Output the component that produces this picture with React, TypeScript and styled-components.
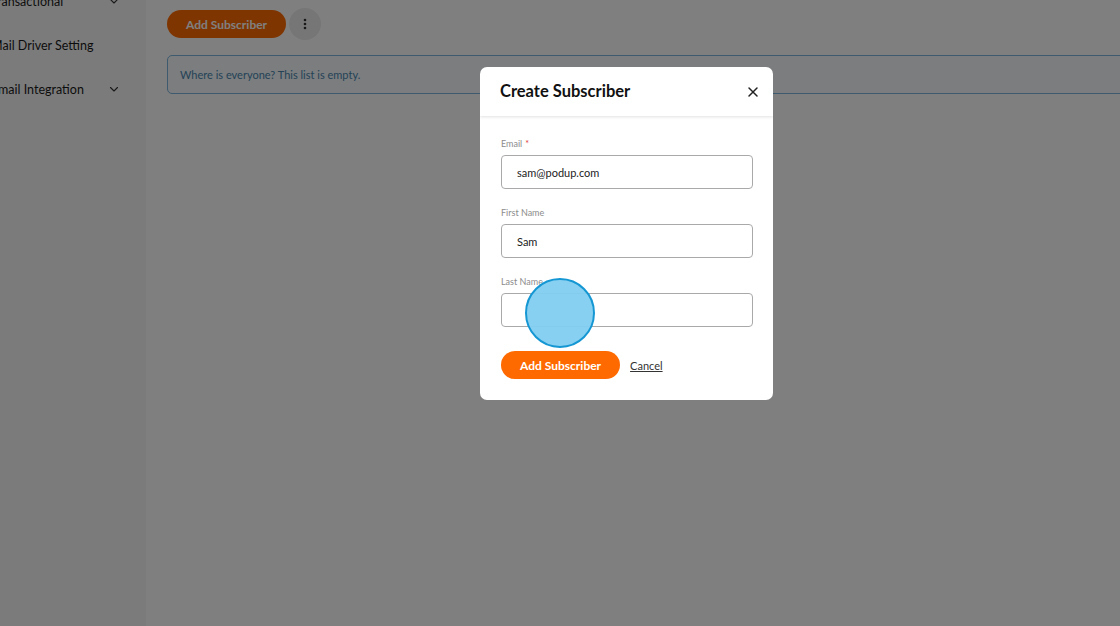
import styled, { createGlobalStyle } from "styled-components";

const Global = createGlobalStyle`
  html, body { margin: 0; padding: 0; }
  body { font-family: Lato, "Noto Sans", sans-serif; background: #fff; color: #111; }
  * { box-sizing: border-box; }
`;

const Page = styled.div`
  position: relative;
  width: 1120px; height: 626px; overflow: hidden;
  display: flex;
`;

const Sidebar = styled.aside`
  width: 146px; flex: none;
  background: #f7f7f7;
  overflow: hidden;
  display: flex; flex-direction: column;
`;

const NavItem = styled.div`
  display: flex; align-items: center; justify-content: space-between;
  height: 44px;
  margin-left: -9px;
  padding-right: 26px;
  font-size: 12.5px; color: #1a1a1a; white-space: nowrap;
  &:first-child { margin-top: -21px; }
  svg { flex: none; }
`;

const Main = styled.main`
  flex: 1; min-width: 0;
  background: #fff;
  padding: 8px 0 0 21px;
  display: flex; flex-direction: column; gap: 15px;
`;

const Toolbar = styled.div`
  display: flex; align-items: center; gap: 3px;
`;

const Pill = styled.button`
  height: 28px; padding: 0 19px;
  border: 0; border-radius: 14px;
  background: #ff6a00; color: #fff;
  font-family: inherit; font-weight: 700; font-size: 12px;
`;

const Kebab = styled.button`
  width: 32px; height: 32px; border-radius: 50%;
  border: 0; background: #ececec;
  display: flex; align-items: center; justify-content: center;
`;

const Alert = styled.div`
  height: 39px; margin-right: -20px;
  border: 1px solid #7cb4dc; border-radius: 5px;
  background: #f6fbff;
  display: flex; align-items: center; padding-left: 12px;
  font-size: 11px; color: #4a86ad;
`;

const Overlay = styled.div`
  position: absolute; inset: 0;
  background: rgba(0, 0, 0, 0.5);
`;

const Modal = styled.div`
  position: absolute; left: 480px; top: 67px;
  width: 293px;
  background: #fff; border-radius: 7px;
  overflow: hidden;
`;

const Header = styled.div`
  height: 49px;
  display: flex; align-items: center; justify-content: space-between;
  padding: 0 14px 0 20px;
  box-shadow: 0 1px 3px rgba(0,0,0,0.12);
  position: relative;
`;

const Title = styled.h2`
  margin: -2px 0 0; font-size: 16.5px; font-weight: 700; color: #111;
`;

const Body = styled.div`
  padding: 22px 20px 21px 21px;
  display: flex; flex-direction: column;
`;

const Field = styled.div`
  display: flex; flex-direction: column; gap: 6px;
  margin-bottom: 18px;
`;

const Label = styled.label`
  font-size: 9px; color: #8c8c8c; line-height: 11px;
  span { color: #e03a3a; margin-left: 3px; }
`;

const Input = styled.div`
  height: 34px; border: 1px solid #a9a9a9; border-radius: 4px;
  display: flex; align-items: center; padding-left: 15px;
  font-size: 11px; color: #222;
`;

const Actions = styled.div`
  display: flex; align-items: center; gap: 10px;
  margin-top: 6px;
`;

const Link = styled.a`
  font-size: 11px; color: #333; text-decoration: underline;
`;

const Tap = styled.div`
  position: absolute; left: 525px; top: 278px;
  width: 70px; height: 70px; border-radius: 50%;
  background: rgba(130, 205, 240, 0.95);
  border: 2px solid #1597d3;
`;

const Chevron = () => (
  <svg width="12" height="12" viewBox="0 0 24 24" fill="none" stroke="#333" strokeWidth="2.2" strokeLinecap="round" strokeLinejoin="round">
    <path d="M5 9l7 7 7-7" />
  </svg>
);

export default function App() {
  return (
    <Page>
      <Global />
      <Sidebar>
        <NavItem>Transactional <Chevron /></NavItem>
        <NavItem>Mail Driver Setting</NavItem>
        <NavItem>Email Integration <Chevron /></NavItem>
      </Sidebar>
      <Main>
        <Toolbar>
          <Pill>Add Subscriber</Pill>
          <Kebab>
            <svg width="4" height="12" viewBox="0 0 4 12"><circle cx="2" cy="2" r="1.3" fill="#333" /><circle cx="2" cy="6" r="1.3" fill="#333" /><circle cx="2" cy="10" r="1.3" fill="#333" /></svg>
          </Kebab>
        </Toolbar>
        <Alert>Where is everyone? This list is empty.</Alert>
      </Main>
      <Overlay />
      <Modal>
        <Header>
          <Title>Create Subscriber</Title>
          <svg width="12" height="12" viewBox="0 0 12 12" stroke="#222" strokeWidth="1.5" strokeLinecap="round"><path d="M2 2l8 8M10 2l-8 8" /></svg>
        </Header>
        <Body>
          <Field>
            <Label>Email<span>*</span></Label>
            <Input>sam@podup.com</Input>
          </Field>
          <Field>
            <Label>First Name</Label>
            <Input>Sam</Input>
          </Field>
          <Field>
            <Label>Last Name</Label>
            <Input />
          </Field>
          <Actions>
            <Pill>Add Subscriber</Pill>
            <Link>Cancel</Link>
          </Actions>
        </Body>
      </Modal>
      <Tap />
    </Page>
  );
}
